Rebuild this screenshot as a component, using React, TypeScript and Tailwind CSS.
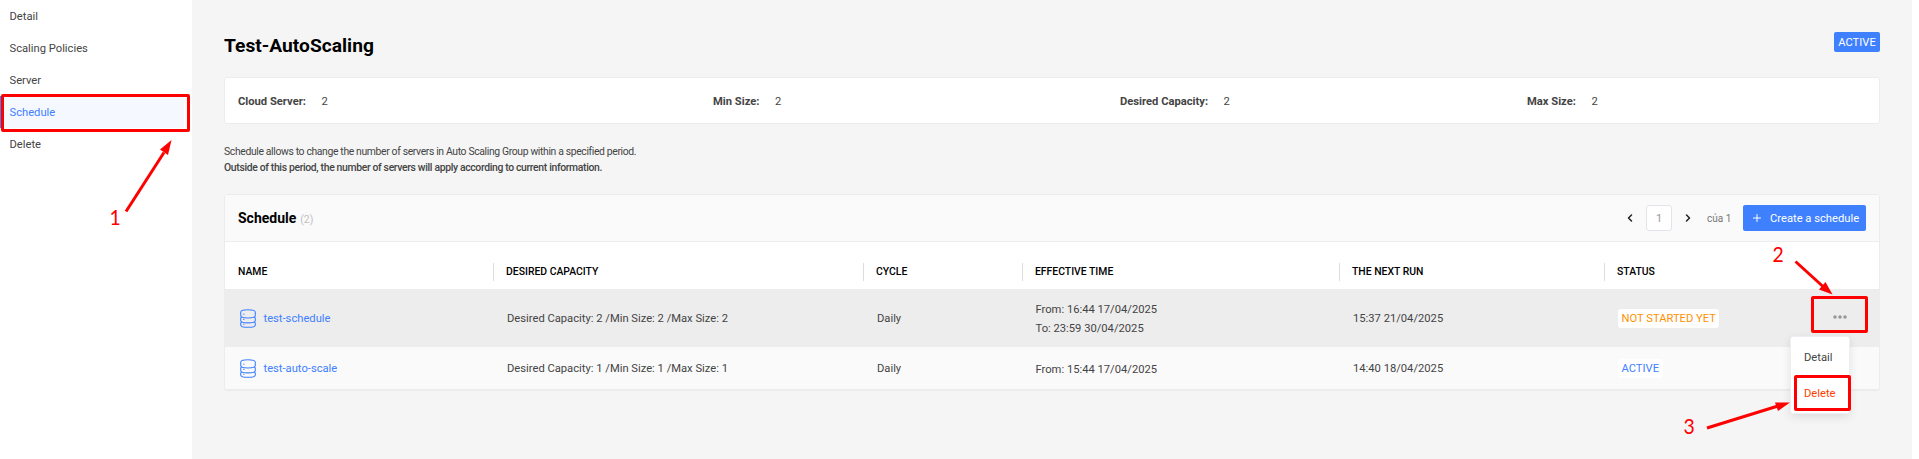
import React from 'react';
import clsx from 'clsx';
import { ChevronLeft, ChevronRight, Plus } from 'lucide-react';

interface ScheduleRow {
  name: string;
  capacity: string;
  cycle: string;
  effective: string[];
  nextRun: string;
  status: string;
  pending: boolean;
}

const MENU = ['Detail', 'Scaling Policies', 'Server', 'Schedule', 'Delete'];

const SUMMARY = [
  { label: 'Cloud Server:', value: '2', width: 'w-[475px]' },
  { label: 'Min Size:', value: '2', width: 'w-[407px]' },
  { label: 'Desired Capacity:', value: '2', width: 'w-[407px]' },
  { label: 'Max Size:', value: '2', width: 'w-[200px]' },
];

const COLUMNS = ['NAME', 'DESIRED CAPACITY', 'CYCLE', 'EFFECTIVE TIME', 'THE NEXT RUN', 'STATUS'];

const ROWS: ScheduleRow[] = [
  {
    name: 'test-schedule',
    capacity: 'Desired Capacity: 2 /Min Size: 2 /Max Size: 2',
    cycle: 'Daily',
    effective: ['From: 16:44 17/04/2025', 'To: 23:59 30/04/2025'],
    nextRun: '15:37 21/04/2025',
    status: 'NOT STARTED YET',
    pending: true,
  },
  {
    name: 'test-auto-scale',
    capacity: 'Desired Capacity: 1 /Min Size: 1 /Max Size: 1',
    cycle: 'Daily',
    effective: ['From: 15:44 17/04/2025'],
    nextRun: '14:40 18/04/2025',
    status: 'ACTIVE',
    pending: false,
  },
];

const GRID = 'grid grid-cols-[269px_370px_159px_317px_265px_1fr]';

function DatabaseIcon() {
  return (
    <svg className="-mt-0.5 w-4 h-[19px] shrink-0" viewBox="0 0 16 19" fill="none" stroke="#3f80ff" strokeWidth="1.1">
      <path d="M.7 3.200C.7 1.500 3.500.7 8 .7s7.300.8 7.300 2.500v3.300c0 1.700-2.800 2.500-7.300 2.500S.7 8.200.7 6.500Z" />
      <path d="M1.700 8c-.7.4-1 .9-1 1.500v2c0 1.600 2.800 2.400 7.300 2.400s7.300-.8 7.300-2.400v-2c0-.6-.3-1.100-1-1.500" />
      <path d="M1.700 12.900c-.7.4-1 .9-1 1.500v1.500c0 1.600 2.800 2.400 7.300 2.400s7.300-.8 7.300-2.400v-1.500c0-.6-.3-1.100-1-1.500" />
      <path d="M3.200 5.300h1.200M3.200 10.400h1.200M3.200 15.200h1.200" />
    </svg>
  );
}

function Sidebar() {
  return (
    <nav className="w-48 shrink-0 bg-white text-[11.2px]">
      {MENU.map((item) => (
        <div
          key={item}
          className={clsx(
            'h-8 w-[184px] pl-[9.5px] pt-[3px] flex items-center',
            item === 'Schedule' && 'bg-[#f5f8ff] text-[#3f80ff] shadow-[inset_3px_0_0_#3f80ff]',
          )}
        >
          {item}
        </div>
      ))}
    </nav>
  );
}

function Pagination() {
  return (
    <div className="flex items-center text-[10px] text-[#777]">
      <ChevronLeft className="w-3 h-3 text-[#222]" strokeWidth={3} />
      <span className="ml-[10px] w-[26px] h-[26px] rounded-[3px] border border-[#e2e4ec] bg-white pt-[3px] flex items-center justify-center text-[11px] text-[#999]">
        1
      </span>
      <ChevronRight className="ml-[10px] w-3 h-3 text-[#222]" strokeWidth={3} />
      <span className="ml-[13px] w-[23px] pt-px whitespace-nowrap">của 1</span>
    </div>
  );
}

function RowMenu() {
  return (
    <div className="absolute left-[1790px] top-[336px] w-[60px] h-[78px] rounded-[3px] border border-[#edeff5] bg-white shadow-[0_3px_10px_rgba(0,0,0,0.1)] text-[11.2px] pl-[13px] pt-px">
      <div className="h-[41px] flex items-center">Detail</div>
      <div className="h-[31px] flex items-center text-[#ff3d00]">Delete</div>
    </div>
  );
}

// Numbered steps drawn over the page
function Annotations() {
  return (
    <div className="absolute inset-0 font-['Lato',sans-serif] text-[21.5px] leading-none text-[#fe0000]">
      <div className="absolute left-[1px] top-[94px] w-[189px] h-[38px] border-3 rounded-[2px] border-[#fe0000]" />
      <div className="absolute left-[1811px] top-[296px] w-[57px] h-[37px] border-3 rounded-[2px] border-[#fe0000]" />
      <div className="absolute left-[1794px] top-[375px] w-[57px] h-[36px] border-3 rounded-[2px] border-[#fe0000]" />
      <svg className="absolute inset-0" width="1919" height="459" fill="#fe0000" stroke="#fe0000">
        <path d="M126 211.5 164 152.5" strokeWidth="3" />
        <path d="M171.500 140 160 149.500 168 155Z" stroke="none" />
        <path d="M1795.500 261.500 1823 286.500" strokeWidth="3" />
        <path d="M1832.500 294.500 1819 289.500 1825.500 282Z" stroke="none" />
        <path d="M1707 428 1778 406" strokeWidth="3" />
        <path d="M1790 402.500 1775 402.500 1778 411Z" stroke="none" />
      </svg>
      <span className="absolute left-[109px] top-[207px] scale-x-90">1</span>
      <span className="absolute left-[1772px] top-[244px] scale-x-90">2</span>
      <span className="absolute left-[1683px] top-[416px] scale-x-90">3</span>
    </div>
  );
}

export default function App() {
  return (
    <div className="relative w-[1919px] h-[459px] overflow-hidden flex bg-white font-['Roboto',sans-serif] text-[#444]">
      <Sidebar />
      <main className="w-[1720px] bg-[#f5f5f5] pl-8 pr-8">
        <div className="h-[77px] flex justify-between items-start">
          <h1 className="mt-8 text-[19.2px] leading-[28px] font-bold text-black">Test-AutoScaling</h1>
          <span className="mt-8 w-[46px] h-5 rounded-[2px] bg-[#3f80ff] text-white text-[11.2px] pt-[3px] flex items-center justify-center">
            ACTIVE
          </span>
        </div>

        <div className="h-[47px] rounded-[3px] border border-[#ececec] bg-white flex items-center pl-[13px] pt-[3px] text-[11.2px]">
          {SUMMARY.map((item) => (
            <div key={item.label} className={clsx('flex gap-[15.5px]', item.width)}>
              <span className="font-bold">{item.label}</span>
              <span>{item.value}</span>
            </div>
          ))}
        </div>

        <div className="mt-5 h-[50px] text-[10.4px] leading-4">
          <p className="tracking-[-0.36px]">
            Schedule allows to change the number of servers in Auto Scaling Group within a specified period.
          </p>
          <p className="font-medium tracking-[-0.34px]">
            Outside of this period, the number of servers will apply according to current information.
          </p>
        </div>

        <section className="h-[197px] rounded-[3px] border border-b-2 border-[#ececec] bg-white">
          <header className="h-[47px] bg-[#fafafa] border-b border-[#ececec] pl-[13px] pr-[13px] flex items-center">
            <h2 className="text-[14px] font-bold text-black">Schedule</h2>
            <span className="ml-1 pt-[3px] text-[10.4px] text-[#c0c0c0]">(2)</span>
            <div className="ml-auto">
              <Pagination />
            </div>
            <button className="ml-[13px] w-[123px] h-[26px] rounded-[2px] bg-[#3f80ff] text-white text-[11.2px] flex items-center pl-2 whitespace-nowrap">
              <Plus className="w-3 h-3" strokeWidth={2} />
              <span className="ml-[7px] pt-[3px]">Create a schedule</span>
            </button>
          </header>

          <div className={clsx(GRID, 'h-[47px] pt-[21px] text-[10.4px] font-medium text-black')}>
            {COLUMNS.map((col, i) => (
              <div
                key={col}
                className={clsx(
                  'h-[18px] flex items-center',
                  i === 0 ? 'pl-[13px]' : 'pl-3',
                  i < COLUMNS.length - 1 && 'border-r border-[#ddd]',
                )}
              >
                {col}
              </div>
            ))}
          </div>

          {ROWS.map((row) => (
            <div
              key={row.name}
              className={clsx(GRID, 'items-center pt-px text-[11.2px]', row.pending ? 'h-[58px] bg-[#ededed]' : 'h-[42px] bg-[#fafafa]')}
            >
              <div className="pl-[14.5px] pt-0.5 flex items-center gap-2 text-[#3f80ff]">
                <DatabaseIcon />
                {row.name}
              </div>
              <div className="pl-[13px] pt-0.5">{row.capacity}</div>
              <div className="pl-[13px] pt-0.5">{row.cycle}</div>
              <div className={clsx('pl-[12.5px] leading-[19px]', !row.pending && 'pt-0.5')}>
                {row.effective.map((line) => (
                  <div key={line}>{line}</div>
                ))}
              </div>
              <div className="pl-[13px] pt-0.5">{row.nextRun}</div>
              <div className="pl-[13px] pr-[32px] flex items-center justify-between">
                <span
                  className={clsx(
                    'h-[19px] px-[3.5px] pt-[2px] rounded-[3px] bg-white flex items-center',
                    row.pending ? 'text-[#ff9100]' : 'text-[#3f80ff]',
                  )}
                >
                  {row.status}
                </span>
                {row.pending && (
                  <svg className="w-[14px] h-1 -mt-1" viewBox="0 0 14 4" fill="#999">
                    <circle cx="2" cy="2" r="1.8" />
                    <circle cx="7" cy="2" r="1.8" />
                    <circle cx="12" cy="2" r="1.8" />
                  </svg>
                )}
              </div>
            </div>
          ))}
        </section>
      </main>
      <RowMenu />
      <Annotations />
    </div>
  );
}
